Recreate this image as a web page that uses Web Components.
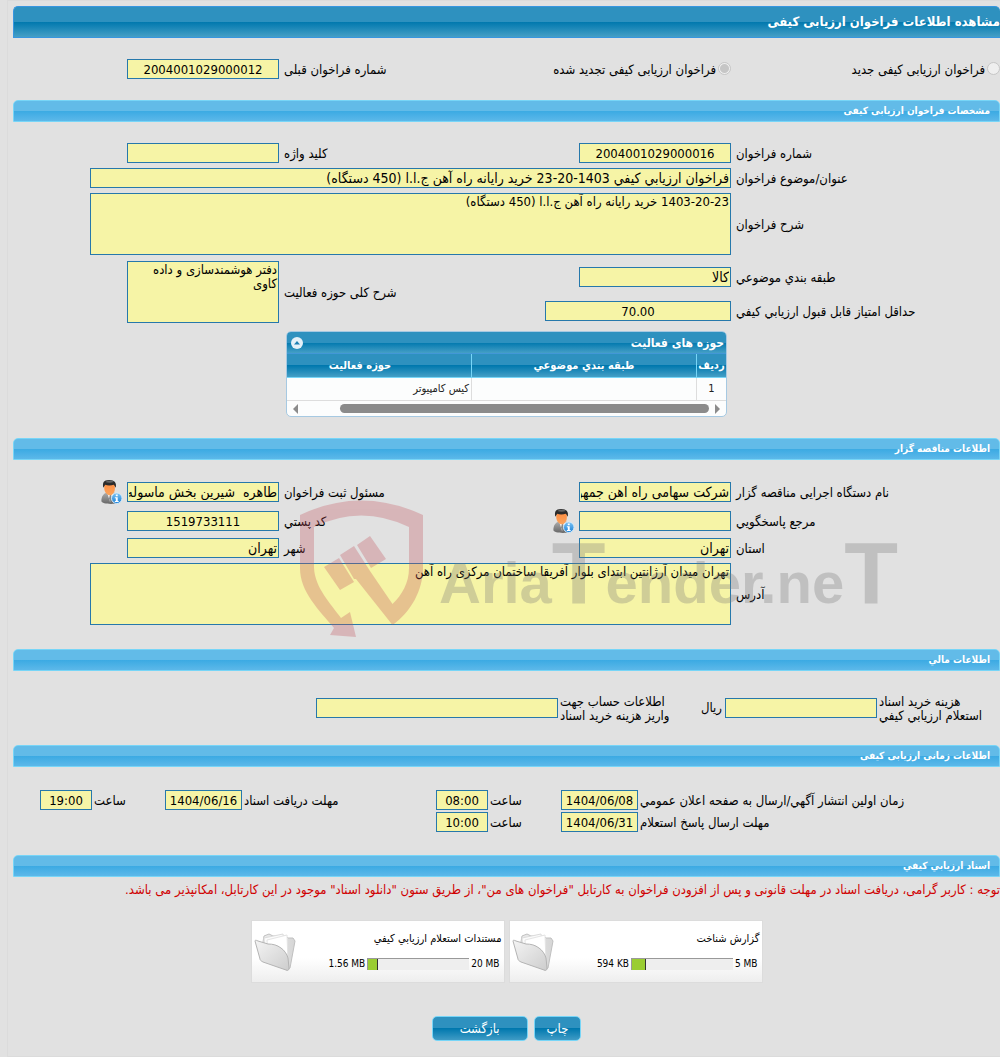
<!DOCTYPE html>
<html lang="fa" dir="rtl">
<head>
<meta charset="utf-8">
<meta name="viewport" content="width=device-width, initial-scale=1">
<title>مشاهده اطلاعات فراخوان ارزیابی کیفی</title>
<style>
  body {
    margin: 0;
    background: #e1e1e1;
    color: #000;
    font: 13px/14px "DejaVu Sans Condensed", "DejaVu Sans", sans-serif;
    --field: #f6f4a6;
    --line: #2678ab;
  }
</style>
</head>
<body>
<tender-page></tender-page>

<script>
const define = (name, html, setup) => {
  const template = document.createElement("template");
  template.innerHTML = html;
  customElements.define(name, class extends HTMLElement {
    constructor() {
      super();
      this.attachShadow({ mode: "open" }).append(template.content.cloneNode(true));
    }
    connectedCallback() {
      if (setup && !this.ready) setup(this, this.shadowRoot);
      this.ready = true;
    }
  });
};

/* Person with an information badge */
define("person-icon", `
  <style>:host { display: block; flex: none; width: 24px; height: 24px; } svg { display: block; }</style>
  <svg width="24" height="24" viewBox="0 0 24 25" aria-hidden="true">
    <defs>
      <linearGradient id="suit" x2="0" y2="1"><stop stop-color="#b4b4b4"/><stop offset="1" stop-color="#666"/></linearGradient>
      <linearGradient id="face" x2="0" y2="1"><stop stop-color="#ff8a3e"/><stop offset="1" stop-color="#fba45c"/></linearGradient>
      <linearGradient id="info" x2="0" y2="1"><stop stop-color="#7cc4f5"/><stop offset="1" stop-color="#1b7fd6"/></linearGradient>
    </defs>
    <path d="M2 22c0-5 2-8 6-9l3-1 4 1c4 1 6 4 6 9 0 2-4 3-9 3s-10-1-10-3z" fill="url(#suit)"/>
    <path d="M8 13l3 10 4-10-3 2z" fill="#f4f4f4"/>
    <path d="M11 15l-1 4 1 5 2-5-1-4z" fill="#888"/>
    <path d="M5 6c0-3 2-4 5-4s6 1 6 4v3c0 4-3 7-5 7-3 0-6-4-6-7z" fill="url(#face)"/>
    <path d="M4 8C3 3 4 0 10 0c6 0 8 3 7 8l-2-3c-3 1-7 1-9 0z" fill="#2b2b2b"/>
    <path d="M6 2c2-1 6-2 9 0-3 1-6 1-9 0z" fill="#666"/>
    <circle cx="18" cy="19" r="5.500" fill="url(#info)" stroke="#d6ecfb"/>
    <path d="M17 15h2v2h-2zM16 18h3v4h1v1h-4v-1h1v-3h-1z" fill="#fff"/>
  </svg>`);

/* Half-open paper folder */
define("folder-icon", `
  <style>:host { display: block; flex: none; width: 42px; height: 40px; } svg { display: block; }</style>
  <svg width="42" height="40" viewBox="0 0 42 40" aria-hidden="true">
    <defs>
      <linearGradient id="front" x2="1" y2="1"><stop stop-color="#f4f4f4"/><stop offset="1" stop-color="#cdcdcd"/></linearGradient>
      <linearGradient id="back" x2="1" y2="0"><stop stop-color="#ececec"/><stop offset="1" stop-color="#d6d6d6"/></linearGradient>
    </defs>
    <path d="M9 10l1-6 5-2 4 2 13 0 2 2 5 0 2 3-5 27-3 2L9 28z" fill="url(#back)" stroke="#c0c0c0"/>
    <path d="M10 6l19-4 4 26-22-6z" fill="#fbfbfb" stroke="#dcdcdc"/>
    <path d="M13 8l20-5 1 27-20-6z" fill="#fff" stroke="#e4e4e4"/>
    <path d="M1 9c0-1 1-1 3 0l10 3c5 0 9 1 13 4 3 2 6 6 7 10l1 10c0 2-1 3-3 2L9 30c-2-1-3-2-3-3z" fill="url(#front)" stroke="#b4b4b4"/>
  </svg>`);

define("page-title", `
  <style>
    :host { display: block; }
    h1 {
      margin: 0; height: 30px; font-size: 13px; line-height: 30px; color: #fff;
      border: 1px solid #3796e0; border-radius: 5px 5px 0 0; border-right: 0;
      background: linear-gradient(#2e91bf 50%, #0078ae 50%, #459fc6);
    }
  </style>
  <h1><slot></slot></h1>`);

/* A titled block of the page */
define("page-section", `
  <style>
    :host { display: block; position: relative; }
    h2 {
      margin: 0; height: 20px; padding: 0 9px; font-size: 10px; line-height: 20px; color: #fff;
      border: 1px solid #77d5f7; border-radius: 5px 5px 0 0;
      background: linear-gradient(#62bbe8 50%, #3baae3 50%, #5cb8e9);
    }
    .body { padding: 21px 0; }
    :host([people]) .body { padding: 20px 0 24px; }
    :host([price]) .body { padding: 22px 0; }
    :host([time]) .body { padding: 23px 0; }
    :host([last]) .body { padding: 6px 0 15px; }
  </style>
  <section>
    <h2></h2>
    <div class="body"><slot></slot></div>
  </section>`, (host, root) => {
  root.querySelector("h2").textContent = host.getAttribute("heading");
});

define("form-grid", `
  <style>
    :host {
      display: grid; align-items: center; gap: 5px 0;
      grid-template-columns: minmax(0, 269fr) 186px minmax(0, 266fr) 152px 37px minmax(0, 77fr);
    }
    :host([kind="price"]) { grid-template-columns: minmax(0, 123fr) 152px minmax(0, 167fr) 242px minmax(0, 303fr); }
    :host([kind="time"]) {
      row-gap: 2px;
      grid-template-columns: minmax(0, 362fr) 77px minmax(0, 73fr) 52px minmax(0, 194fr) 77px minmax(0, 73fr) 52px minmax(0, 27fr);
    }
  </style>
  <slot></slot>`);

/* Label and text control; both are cells of the surrounding form-grid.
   at = column of the label, row = grid row, span / rows = columns / rows taken */
define("form-field", `
  <style>
    :host { display: contents; }
    label { justify-self: end; padding: 2px 0 0 5px; text-align: end; white-space: nowrap; }
    :host([tight]) label { padding-left: 2px; }
    .cell { display: flex; align-items: center; gap: 4px; min-width: 0; }
    input, textarea {
      box-sizing: border-box; width: 152px; height: 20px; margin: 0; padding: 0 1px;
      border: 1px solid var(--line); border-radius: 0; outline: 0;
      background: var(--field); color: #000; font: inherit; font-size: 14px;
    }
    textarea { display: block; height: 62px; font-size: 13px; line-height: 14px; resize: none; overflow: hidden; padding: 1px; }
    :host([number]) input { text-align: center; direction: ltr; font-size: 13px; }
    :host([fill]) input, :host([fill]) textarea { width: 100%; }
  </style>
  <label for="control"></label>
  <div class="cell"><slot></slot></div>`, (host, root) => {
  const at = Number(host.getAttribute("at") || 1);
  const row = host.getAttribute("row") || "1";
  const rows = host.getAttribute("rows") || "1";
  const label = root.querySelector("label");
  const cell = root.querySelector(".cell");
  const control = document.createElement(host.hasAttribute("multiline") ? "textarea" : "input");
  control.id = "control";
  control.readOnly = true;
  control.value = host.getAttribute("value") || "";
  cell.prepend(control);
  label.innerHTML = host.getAttribute("label").split("|").join("<br>");
  label.style.gridArea = `${row} / ${at} / span ${rows}`;
  cell.style.gridArea = `${row} / ${at + 1} / span ${rows} / span ${host.getAttribute("span") || 1}`;
});

define("radio-field", `
  <style>
    :host { display: flex; align-items: center; }
    input {
      appearance: none; box-sizing: border-box; width: 13px; height: 13px; margin: 0 0 2px 2px;
      border: 1px solid #c6c6c6; border-radius: 50%; background: #efefef; flex: none;
    }
    input:checked { background: radial-gradient(circle, #c6c6c6 4px, #efefef 5px); }
    label { padding-top: 2px; white-space: nowrap; }
  </style>
  <input type="radio" id="radio" disabled><label for="radio"><slot></slot></label>`, (host, root) => {
  root.querySelector("input").checked = host.hasAttribute("checked");
});

define("activity-table", `
  <style>
    :host { display: block; width: 441px; margin: 8px auto 0; }
    .frame { border: 1px solid #a6c9e2; border-radius: 5px; overflow: hidden; background: #fcfdfd; }
    .title {
      display: flex; align-items: center; justify-content: space-between; height: 21px; padding: 0 2px;
      color: #fff; font-size: 12px; font-weight: bold; border-bottom: 1px solid #4297d7;
      background: linear-gradient(#2e91bf 50%, #0078ae 50%, #459fc6);
    }
    button { width: 16px; height: 16px; padding: 0; border: 0; background: none; }
    svg { display: block; }
    table { width: 100%; table-layout: fixed; border-collapse: separate; border-spacing: 0; }
    th {
      box-sizing: border-box; height: 24px; padding: 0; color: #fff; font-size: 11px; border-bottom: 1px solid #77d5f7;
      background: linear-gradient(#2e91bf 50%, #0078ae 50%, #459fc6);
    }
    td { box-sizing: border-box; height: 23px; padding: 0 2px; font-size: 11px; color: #222; border-bottom: 1px solid #ddd; }
    th + th { border-right: 1px solid #77d5f7; }
    td + td { border-right: 1px solid #ddd; }
    td:first-child { text-align: center; }
    th.offset { padding-right: 38px; }
    .scroll { display: flex; align-items: center; height: 15px; padding: 0 5px; gap: 6px; }
    .track { flex: 1; }
    .thumb { width: 91%; height: 9px; border-radius: 5px; background: #8b8b8b; }
  </style>
  <div class="frame">
    <div class="title">
      <span>حوزه های فعالیت</span>
      <button type="button" aria-label="بستن">
        <svg width="16" height="16" viewBox="0 0 16 16"><circle cx="8" cy="8" r="6" fill="#e4f0f8"/><path d="M5 9.500h6L8 6z" fill="#1c7fb3"/></svg>
      </button>
    </div>
    <table>
      <colgroup><col style="width:29px"><col style="width:225px"><col></colgroup>
      <thead><tr><th>ردیف</th><th>طبقه بندي موضوعي</th><th class="offset">حوزه فعالیت</th></tr></thead>
      <tbody><tr><td>1</td><td></td><td>کیس کامپیوتر</td></tr></tbody>
    </table>
    <div class="scroll" aria-hidden="true">
      <svg width="6" height="10"><path d="M0 0l5 5-5 5z" fill="#8b8b8b"/></svg>
      <div class="track"><div class="thumb"></div></div>
      <svg width="6" height="10"><path d="M6 0L1 5l5 5z" fill="#8b8b8b"/></svg>
    </div>
  </div>`);

/* Faded site mark lying over the form */
define("water-mark", `
  <style>
    :host { position: absolute; left: 29%; top: 62px; width: 610px; pointer-events: none; }
    svg { display: block; overflow: visible; opacity: .3; }
    text { direction: ltr; font: bold 58px "Liberation Sans", sans-serif; fill: #777; }
    .tall { font-size: 88px; }
  </style>
  <svg width="610" height="140" viewBox="0 0 610 140">
    <g fill="#c3525c">
      <path d="M1 15Q62-14 124 15V68C124 90 112 112 93.500 125L57 79H55L41 55 55 46 71 71 93.500 104C103 95 110 83 110 68V27Q62 4 15 27V68C16 88 32 104 42 118L51 112 57 137 31 135 35 128C20 110 1 92 1 68Z"/>
      <path d="M58 45L71 36 87 59 72 68ZM25 67L40 58 55 82 41 90Z"/>
    </g>
    <text x="140" y="103">Aria<tspan class="tall">T</tspan>ender.ne<tspan class="tall">T</tspan></text>
  </svg>`);

define("document-card", `
  <style>
    :host {
      display: flex; align-items: center; box-sizing: border-box; width: 254px; height: 63px; padding: 0 3px;
      background: linear-gradient(#fff 60%, #ededed); outline: 1px solid #dcdcdc; outline-offset: -1px;
    }
    .text { flex: 1; display: flex; flex-direction: column; gap: 11px; font-size: 11px; }
    .usage { display: flex; align-items: center; gap: 2px; direction: ltr; justify-content: flex-end; font-size: 10px; }
    .bar { box-sizing: border-box; width: 102px; height: 12px; border: 1px solid #999; border-width: 1px 0 0 1px; background: #eee; }
    .bar div { box-sizing: border-box; height: 100%; background: #9acd32; border-right: 1px solid #333; }
    .usage span:last-child { padding-right: 2px; }
  </style>
  <div class="text">
    <div><slot></slot></div>
    <div class="usage"><span id="used"></span><div class="bar" role="progressbar"><div></div></div><span id="total"></span></div>
  </div>
  <folder-icon></folder-icon>`, (host, root) => {
  root.getElementById("used").textContent = host.getAttribute("used");
  root.getElementById("total").textContent = host.getAttribute("total");
  root.querySelector(".bar div").style.width = host.getAttribute("percent") + "%";
});

define("action-button", `
  <style>
    :host { display: block; }
    button {
      box-sizing: border-box; height: 25px; padding: 0 12px; font: inherit; font-size: 13px; color: #fff;
      border: 1px solid #77d5f7; border-radius: 5px;
      background: linear-gradient(#2e91bf 50%, #0078ae 50%, #3f9bc5);
    }
    :host([wide]) button { padding: 0 27px; }
  </style>
  <button type="button"><slot></slot></button>`);

define("tender-page", `
  <style>
    :host { display: block; }
    main { margin-left: 7px; padding: 5px 0 0 5px; border: 1px solid #dbdbdb; border-right: 0; }
    .kind { padding: 21px 0; }
    .kind radio-field:nth-child(2) { grid-column: 2 / 4; }
    .kind radio-field { grid-row: 1; }
    .two-line { grid-template-rows: 34px 24px; margin-top: 5px; }
    .unit { padding-right: 3px; grid-area: 1 / 3; }
    .notice { margin: 0; color: #d00000; white-space: nowrap; }
    .cards { display: flex; justify-content: center; gap: 4px; padding: 23px 0 33px; }
    .actions { display: flex; justify-content: center; gap: 6px; }
  </style>
  <main>
    <page-title>مشاهده اطلاعات فراخوان ارزیابی کیفی</page-title>
    <form-grid class="kind">
      <radio-field>فراخوان ارزیابی کیفی جدید</radio-field>
      <radio-field checked>فراخوان ارزیابی کیفی تجدید شده</radio-field>
      <form-field at="3" number label="شماره فراخوان قبلی" value="2004001029000012"></form-field>
    </form-grid>

    <page-section heading="مشخصات فراخوان ارزیابی کیفی">
      <form-grid>
        <form-field number label="شماره فراخوان" value="2004001029000016"></form-field>
        <form-field at="3" label="کلید واژه"></form-field>
        <form-field row="2" span="4" fill label="عنوان/موضوع فراخوان" value="فراخوان ارزیابي کیفي 1403-20-23 خرید رایانه راه آهن ج.ا.ا (450 دستگاه)"></form-field>
        <form-field row="3" span="4" fill multiline label="شرح فراخوان" value="1403-20-23 خرید رایانه راه آهن ج.ا.ا (450 دستگاه)"></form-field>
      </form-grid>
      <form-grid class="two-line">
        <form-field label="طبقه بندي موضوعي" value="کالا"></form-field>
        <form-field row="2" fill number label="حداقل امتیاز قابل قبول ارزیابي کیفي" value="70.00"></form-field>
        <form-field at="3" rows="2" multiline label="شرح کلی حوزه فعالیت" value="دفتر هوشمندسازی و داده کاوی"></form-field>
      </form-grid>
      <activity-table></activity-table>
    </page-section>

    <page-section people heading="اطلاعات مناقصه گزار">
      <form-grid>
        <form-field label="نام دستگاه اجرایی مناقصه گزار" value="شرکت سهامی راه اهن جمهوری"></form-field>
        <form-field at="3" span="2" label="مسئول ثبت فراخوان" value="طاهره&nbsp; شیرین بخش ماسوله"><person-icon></person-icon></form-field>
        <form-field row="2" label="مرجع پاسخگویي"><person-icon></person-icon></form-field>
        <form-field at="3" row="2" number label="کد پستي" value="1519733111"></form-field>
        <form-field row="3" label="استان" value="تهران"></form-field>
        <form-field at="3" row="3" label="شهر" value="تهران"></form-field>
        <form-field row="4" span="4" fill multiline label="آدرس" value="تهران میدان آرژانتین ابتدای بلوار آفریقا ساختمان مرکزی راه آهن"></form-field>
      </form-grid>
      <water-mark></water-mark>
    </page-section>

    <page-section price heading="اطلاعات مالي">
      <form-grid kind="price">
        <form-field tight label="هزینه خرید اسناد|استعلام ارزیابي کیفي"></form-field>
        <span class="unit">ریال</span>
        <form-field tight fill at="3" label="اطلاعات حساب جهت|واریز هزینه خرید اسناد"></form-field>
      </form-grid>
    </page-section>

    <page-section time heading="اطلاعات زمانی ارزیابی کیفی">
      <form-grid kind="time">
        <form-field tight fill number label="زمان اولین انتشار آگهي/ارسال به صفحه اعلان عمومي" value="1404/06/08"></form-field>
        <form-field tight fill number at="3" label="ساعت" value="08:00"></form-field>
        <form-field tight fill number at="5" label="مهلت دریافت اسناد" value="1404/06/16"></form-field>
        <form-field tight fill number at="7" label="ساعت" value="19:00"></form-field>
        <form-field tight fill number row="2" label="مهلت ارسال پاسخ استعلام" value="1404/06/31"></form-field>
        <form-field tight fill number row="2" at="3" label="ساعت" value="10:00"></form-field>
      </form-grid>
    </page-section>

    <page-section last heading="اسناد ارزیابي کیفي">
      <p class="notice">توجه : کاربر گرامی، دریافت اسناد در مهلت قانونی و پس از افزودن فراخوان به کارتابل "فراخوان های من"، از طریق ستون "دانلود اسناد" موجود در این کارتابل، امکانپذیر می باشد.</p>
      <div class="cards">
        <document-card used="594 KB" total="5 MB" percent="14">گزارش شناخت</document-card>
        <document-card used="1.56 MB" total="20 MB" percent="10">مستندات استعلام ارزیابي کیفي</document-card>
      </div>
      <div class="actions">
        <action-button>چاپ</action-button>
        <action-button wide>بازگشت</action-button>
      </div>
    </page-section>
  </main>`);
</script>
</body>
</html>
